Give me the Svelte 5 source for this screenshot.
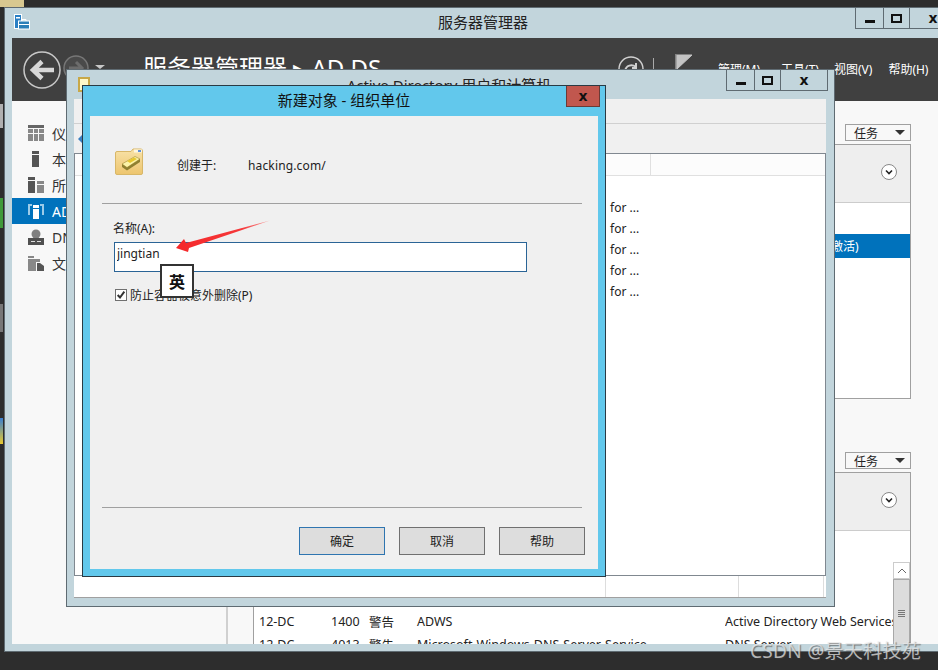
<script>
  const menus = ["管理(M)", "工具(T)", "视图(V)", "帮助(H)"];
  const navItems = [
    { label: "仪表板", icon: "grid" },
    { label: "本地服务器", icon: "server" },
    { label: "所有服务器", icon: "servers" },
    { label: "AD DS", icon: "ad", active: true },
    { label: "DNS", icon: "dns" },
    { label: "文件和存储服务", icon: "files" }
  ];
  const events = [
    ["12-DC", "1400", "警告", "ADWS", "Active Directory Web Services"],
    ["12-DC", "4013", "警告", "Microsoft-Windows-DNS-Server-Service", "DNS Server"]
  ];
  const rows = [1, 2, 3, 4, 5];
</script>

<div class="desktop">
  <!-- bits of desktop icons left of the window -->
  <div class="dk dk-yellow"></div>
  <div class="dk dk-silver"></div>
  <div class="dk dk-globe"></div>
  <div class="dk dk-grey"></div>
  <div class="dk dk-color"></div>

  <!-- Server Manager -->
  <div class="win main">
    <div class="titlebar">
      <svg class="app-icon" viewBox="0 0 16 16" width="16" height="16">
        <rect x="0.5" y="0.5" width="7" height="14" fill="#2a7fc4" stroke="#fff" />
        <rect x="2" y="3" width="4" height="1.5" fill="#fff" />
        <rect x="4.5" y="7" width="11" height="8" fill="#2d7fb8" stroke="#fff" />
        <path d="M8 7 V5.5 H12 V7 M4.5 10.5 H15.5" fill="none" stroke="#fff" />
      </svg>
      <span class="main-title">服务器管理器</span>
      <div class="winbtns">
        <span class="wb min"><i></i></span>
        <span class="wb max"><i></i></span>
        <span class="wb close">x</span>
      </div>
    </div>
    <div class="band">
      <svg class="nav-back" viewBox="0 0 40 40" width="40" height="40">
        <circle cx="20" cy="20" r="18" fill="none" stroke="#c8c8c8" stroke-width="1.5" />
        <path d="M32 20 H12 M20 11.5 L11 20 L20 28.5" fill="none" stroke="#d8d8d8" stroke-width="4.5" />
      </svg>
      <svg class="nav-fwd" viewBox="0 0 26 26" width="26" height="26">
        <circle cx="13" cy="13" r="12" fill="#4a4a4a" stroke="#777" stroke-width="1.5" />
        <path d="M6 13 H18 M13 7 L19 13 L13 19" fill="none" stroke="#6c6c6c" stroke-width="3" />
      </svg>
      <i class="nav-drop"></i>
      <span class="crumb">服务器管理器 ▸ AD DS</span>
      <div class="band-right">
        <svg class="refresh" viewBox="0 0 26 26" width="26" height="26">
          <circle cx="13" cy="13" r="12" fill="none" stroke="#d0d0d0" stroke-width="1.5" />
          <path d="M7 15 C8 9 14 8 18 11 M18 7 V12 H14" fill="none" stroke="#d0d0d0" stroke-width="2" />
        </svg>
        <span class="pipe"></span>
        <svg class="flag" viewBox="0 0 18 24" width="18" height="24">
          <path d="M1 0 V24 M2 1 H17 L2 15 Z" fill="#c4c4c4" stroke="#c4c4c4" />
        </svg>
        <nav class="menus">
          {#each menus as m}<span>{m}</span>{/each}
        </nav>
      </div>
    </div>
    <div class="main-body">
      <aside class="sidebar">
        {#each navItems as item}
          <div class="nav-item" class:active={item.active}>
            <svg viewBox="0 0 16 16" width="16" height="16">
              {#if item.icon === "grid"}
                <path d="M0 0 H16 V3 H0 Z" fill="#666" />
                <path d="M0 4 H5 V8 H0 Z M0 9 H5 V16 H0 Z M6 4 H10 V8 H6 Z M11 4 H16 V8 H11 Z M6 9 H10 V16 H6 Z M11 9 H16 V16 H11 Z" fill="#888" />
              {:else if item.icon === "server"}
                <rect x="4" y="0" width="7" height="3" fill="#555" />
                <rect x="4" y="4" width="7" height="12" fill="#555" />
              {:else if item.icon === "servers"}
                <rect x="0" y="0" width="7" height="3" fill="#555" />
                <rect x="0" y="4" width="7" height="12" fill="#555" />
                <rect x="9" y="4" width="7" height="3" fill="#888" />
                <rect x="9" y="8" width="7" height="8" fill="#888" />
              {:else if item.icon === "ad"}
                <path d="M0 1 H4 V3 H2 V12 H0 Z M12 1 H16 V12 H14 V3 H12 Z" fill="#9ccbe8" />
                <rect x="5" y="2" width="6" height="3" fill="#fff" />
                <rect x="5" y="6" width="6" height="10" fill="#fff" />
              {:else if item.icon === "dns"}
                <circle cx="8" cy="5" r="4.5" fill="#808080" />
                <rect x="0" y="9" width="16" height="7" fill="#505050" />
                <path d="M3 12.5 H7 M9 12.5 H13" stroke="#ddd" stroke-width="1.2" />
              {:else}
                <path d="M0 1 H6 V3 H0 Z M0 4 H12 V7 H8 V16 H0 Z" fill="#888" />
                <path d="M9 8 H12 L16 11 V16 H9 Z" fill="#555" />
              {/if}
            </svg>
            <span>{item.label}</span>
          </div>
        {/each}
      </aside>
      <div class="gutter"></div>
      <section class="content">
        <div class="group first">
          <div class="tasks"><span>任务</span><i></i></div>
          <div class="panel p-top">
            <div class="panel-head"><span class="chev"><svg viewBox="0 0 10 10" width="10" height="10"><path d="M2 3.5 L5 6.5 L8 3.5" fill="none" stroke="#222" stroke-width="1.6" /></svg></span></div>
            <div class="panel-cols"></div>
            <div class="sel-row"><span>激活)</span></div>
          </div>
        </div>
        <div class="group second">
          <div class="tasks"><span>任务</span><i></i></div>
          <div class="panel p-bottom">
            <div class="panel-head"><span class="chev"><svg viewBox="0 0 10 10" width="10" height="10"><path d="M2 3.5 L5 6.5 L8 3.5" fill="none" stroke="#222" stroke-width="1.6" /></svg></span></div>
            <div class="events">
              {#each events as ev}
                <div class="ev">
                  <span class="c1">{ev[0]}</span><span class="c2">{ev[1]}</span><span class="c3">{ev[2]}</span><span class="c4">{ev[3]}</span><span class="c5">{ev[4]}</span>
                </div>
              {/each}
            </div>
            <div class="scroll">
              <span class="arrow"><svg viewBox="0 0 10 6" width="10" height="6"><path d="M1 5 L5 1 L9 5" fill="none" stroke="#666" /></svg></span>
              <span class="thumb"><i></i></span>
            </div>
          </div>
        </div>
      </section>
    </div>
  </div>

  <!-- Active Directory users and computers -->
  <div class="win ad">
    <div class="titlebar ad-title">
      <span class="ad-icon"></span>
      <span class="ad-name">Active Directory 用户和计算机</span>
      <div class="winbtns">
        <span class="wb min"><i></i></span>
        <span class="wb max"><i></i></span>
        <span class="wb close wide">x</span>
      </div>
    </div>
    <div class="ad-inner">
      <div class="ad-menu"></div>
      <div class="ad-tools"><i class="ad-back"></i></div>
      <div class="ad-list">
        <div class="ad-head"><span class="ad-col"></span></div>
        <div class="ad-rows">
          {#each rows as r}<div class="ad-row">for ...</div>{/each}
        </div>
      </div>
      <div class="ad-status"><span></span><span></span><span></span></div>
    </div>
  </div>

  <!-- New object dialog -->
  <div class="dialog">
    <div class="dlg-title">
      <span>新建对象 - 组织单位</span>
      <span class="dlg-close">x</span>
    </div>
    <div class="dlg-body">
      <div class="created">
        <svg viewBox="0 0 30 28" width="30" height="28">
          <defs>
            <linearGradient id="folderFill" x1="0" y1="0" x2="0" y2="1">
              <stop offset="0" stop-color="#f8e2a8" />
              <stop offset="1" stop-color="#edc56e" />
            </linearGradient>
          </defs>
          <path d="M1.5 5 Q1.5 3.5 3 3.5 H17 L19 1 H27 Q28.5 1 28.5 3 V25 Q28.5 26.5 27 26.5 H3 Q1.5 26.5 1.5 25 Z" fill="url(#folderFill)" stroke="#d8b768" />
          <rect x="20" y="1.5" width="8" height="3" fill="#fdf6e0" />
          <rect x="24" y="2" width="3" height="2" fill="#5f8fd8" />
          <path d="M8 16 L21 8.5 L26 11 L13 19.5 Z" fill="#fbf3a8" stroke="#a08a30" stroke-width="0.6" />
          <path d="M8 16 L13 19.5 L26 11 V14 L13 22.5 L8 19 Z" fill="#8f8030" />
          <path d="M13 13 L20 9.5 L23 11 L16 15 Z" fill="#e8c830" />
        </svg>
        <span class="created-lbl">创建于:</span>
        <span class="created-val">hacking.com/</span>
      </div>
      <hr />
      <label class="name-lbl" for="ou">名称(A):</label>
      <input id="ou" class="name-input" value="jingtian" />
      <div class="check-row">
        <span class="check"><svg viewBox="0 0 12 12" width="12" height="12"><path d="M2 6 L4.8 9 L10 2" fill="none" stroke="#333" stroke-width="2.4" /></svg></span>
        <span>防止容器被意外删除(P)</span>
      </div>
      <hr class="hr-bottom" />
      <div class="buttons">
        <span class="btn default">确定</span>
        <span class="btn">取消</span>
        <span class="btn">帮助</span>
      </div>
      <div class="ime">英</div>
      <svg class="arrow-mark" viewBox="0 0 100 34" width="100" height="34">
        <defs>
          <linearGradient id="arrowFill" x1="0" y1="0" x2="1" y2="0">
            <stop offset="0" stop-color="#f5282a" />
            <stop offset="0.7" stop-color="#f5383a" />
            <stop offset="1" stop-color="#f9a0a0" />
          </linearGradient>
        </defs>
        <path d="M95 0.5 L11 23 L9 19 L1 28 L13 32 L14 28 Z" fill="url(#arrowFill)" />
      </svg>
    </div>
  </div>

  <div class="watermark">CSDN @景天科技苑</div>
</div>

<style>
  :global(body) {
    margin: 0;
    background: #2d2d2d;
  }
  .desktop {
    position: relative;
    width: 938px;
    height: 670px;
    overflow: hidden;
    background: #2d2d2d;
    font-family: "Noto Sans", "Noto Sans CJK SC", sans-serif;
    font-size: 12px;
    color: #222;
  }
  .dk {
    position: absolute;
    left: 0;
    width: 3px;
  }
  .dk-yellow {
    top: 0;
    width: 24px;
    height: 7px;
    background: #d8c890;
  }
  .dk-silver {
    top: 104px;
    height: 24px;
    background: #b0b0b0;
  }
  .dk-globe {
    top: 198px;
    height: 30px;
    background: #3f9a3a;
  }
  .dk-grey {
    top: 304px;
    height: 28px;
    background: #777;
  }
  .dk-color {
    top: 418px;
    height: 26px;
    background: linear-gradient(#3a7fd0, #e8c92e);
  }
  .win {
    position: absolute;
    box-sizing: border-box;
    background: #c2d5dc;
    border: 1px solid #5f6b72;
    display: flex;
    flex-direction: column;
  }
  .main {
    left: 4px;
    top: 7px;
    width: 958px;
    height: 645px;
    padding: 0 7px 7px;
  }
  .titlebar {
    position: relative;
    height: 30px;
    flex: none;
    display: flex;
    align-items: center;
    justify-content: center;
    font-size: 15px;
  }
  .app-icon {
    position: absolute;
    left: 2px;
    top: 6px;
  }
  .main-title {
    margin-top: -3px;
  }
  .winbtns {
    position: absolute;
    top: 0;
    display: flex;
    height: 21px;
    right: -3px;
    border-left: 1px solid #5f6b72;
    border-bottom: 1px solid #5f6b72;
    box-sizing: border-box;
  }
  .wb {
    width: 27px;
    display: flex;
    align-items: center;
    justify-content: center;
    border-right: 1px solid #5f6b72;
    font-weight: 700;
    font-size: 14px;
    line-height: 16px;
    color: #111;
    font-family: "DejaVu Sans", sans-serif;
  }
  .wb.max {
    width: 25px;
  }
  .wb.close {
    width: 46px;
  }
  .wb i {
    display: block;
  }
  .wb.min i {
    width: 10px;
    height: 3px;
    margin-top: 7px;
    background: #111;
  }
  .wb.max i {
    width: 7px;
    height: 5px;
    border: 2px solid #111;
  }
  .band {
    height: 63px;
    flex: none;
    background: #404040;
    position: relative;
    display: flex;
    align-items: center;
    padding-left: 10px;
    color: #fff;
  }
  .nav-fwd {
    margin-left: 1px;
    margin-top: -3px;
  }
  .nav-drop {
    width: 0;
    height: 0;
    margin: -5px 0 0 6px;
    border-left: 5px solid transparent;
    border-right: 5px solid transparent;
    border-top: 4px solid #c8c8c8;
  }
  .crumb {
    margin-left: 38px;
    font-size: 24px;
    white-space: nowrap;
    margin-top: -6px;
  }
  .band-right {
    position: absolute;
    left: 606px;
    top: 18px;
    display: flex;
    align-items: center;
    height: 26px;
    color: #fff;
  }
  .pipe {
    width: 1px;
    height: 22px;
    margin-left: 9px;
    background: #aaa;
  }
  .flag {
    margin-left: 21px;
    margin-top: -6px;
  }
  .menus {
    display: flex;
    margin-left: 25px;
    white-space: nowrap;
    font-size: 12px;
  }
  .menus span:nth-child(2) {
    margin-left: 21px;
  }
  .menus span:nth-child(3) {
    margin-left: 15px;
  }
  .menus span:nth-child(4) {
    margin-left: 16px;
  }
  .main-body {
    flex: 1;
    min-height: 0;
    display: flex;
    background: #f8f8f8;
    overflow: hidden;
  }
  .sidebar {
    width: 216px;
    box-sizing: border-box;
    border-right: 2px solid #d0d0d0;
    padding-top: 19px;
    flex: none;
    height: 100%;
  }
  .nav-item {
    height: 26px;
    display: flex;
    align-items: center;
    padding-left: 16px;
    gap: 8px;
    font-size: 14px;
    color: #333;
    white-space: nowrap;
  }
  .nav-item.active {
    background: #0072bc;
    color: #fff;
  }
  .gutter {
    width: 25px;
    flex: none;
  }
  .content {
    flex: none;
    width: 658px;
    display: flex;
    flex-direction: column;
    background: #f8f8f8;
  }
  .group {
    display: flex;
    flex-direction: column;
    align-items: flex-end;
  }
  .first {
    padding-top: 23px;
  }
  .second {
    flex: 1;
    min-height: 0;
    padding-top: 53px;
    background: #f8f8f8;
  }
  .tasks {
    width: 66px;
    height: 17px;
    box-sizing: border-box;
    border: 1px solid #a0a0a0;
    display: flex;
    align-items: center;
    justify-content: space-between;
    padding: 0 5px 0 8px;
    font-size: 12px;
    background: #f8f8f8;
  }
  .tasks i {
    width: 0;
    height: 0;
    border-left: 5px solid transparent;
    border-right: 5px solid transparent;
    border-top: 5px solid #333;
  }
  .panel {
    position: relative;
    width: 100%;
    margin-top: 3px;
    box-sizing: border-box;
    border: 1px solid #a0a0a0;
    border-bottom: none;
    background: #fff;
  }
  .p-top {
    height: 255px;
    border-bottom: 1px solid #a0a0a0;
  }
  .p-bottom {
    flex: 1;
    min-height: 0;
    overflow: hidden;
  }
  .panel-head {
    height: 58px;
    background: #eee;
    border-bottom: 1px solid #ccc;
    display: flex;
    align-items: center;
    justify-content: flex-end;
    padding-right: 13px;
    padding-bottom: 4px;
    box-sizing: border-box;
  }
  .chev {
    width: 14px;
    height: 14px;
    border: 1px solid #888;
    border-radius: 50%;
    background: #fff;
    display: flex;
    align-items: center;
    justify-content: center;
  }
  .panel-cols {
    height: 31px;
  }
  .sel-row {
    height: 24px;
    background: #0072bc;
    color: #fff;
    display: flex;
    align-items: center;
    padding-left: 577px;
  }
  .events {
    padding: 79px 0 0 5px;
    font-size: 12.5px;
  }
  .ev {
    height: 23px;
    display: flex;
    align-items: center;
    white-space: nowrap;
  }
  .c1 { width: 72px; }
  .c2 { width: 38px; }
  .c3 { width: 48px; }
  .c4 { width: 308px; }
  .c5 { width: 171px; overflow: hidden; }
  .scroll {
    position: absolute;
    right: 0;
    top: 89px;
    width: 17px;
    display: flex;
    flex-direction: column;
    background: #f0f0f0;
  }
  .arrow {
    height: 17px;
    display: flex;
    align-items: center;
    justify-content: center;
    background: #fff;
    border: 1px solid #ccc;
    box-sizing: border-box;
  }
  .thumb {
    height: 70px;
    background: #dcdcdc;
    border: 1px solid #a8a8a8;
    box-sizing: border-box;
    display: flex;
    justify-content: center;
    align-items: center;
  }
  .thumb i {
    width: 7px;
    height: 8px;
    background: repeating-linear-gradient(#777 0 1px, transparent 1px 2px);
  }
  .ad {
    left: 66px;
    top: 69px;
    width: 769px;
    height: 538px;
    padding: 0 8px 8px 7px;
  }
  .ad-title {
    position: relative;
    height: 29px;
  }
  .ad-icon {
    position: absolute;
    left: 4px;
    top: 7px;
    width: 12px;
    height: 15px;
    box-sizing: border-box;
    background: #fff8c8;
    border: 2px solid #c8a848;
  }
  .ad-name {
    margin-top: -1px;
    margin-left: -2px;
  }
  .ad .winbtns {
    right: -2px;
  }
  .ad-inner {
    flex: 1;
    min-height: 0;
    display: flex;
    flex-direction: column;
    background: #f0f0f0;
    border-bottom: 1px solid #a0a0a0;
  }
  .ad-menu {
    height: 24px;
    flex: none;
    border-bottom: 1px solid #d0d0d0;
  }
  .ad-tools {
    height: 29px;
    flex: none;
    display: flex;
    align-items: center;
    padding-left: 4px;
  }
  .ad-back {
    width: 0;
    height: 0;
    border-top: 4px solid transparent;
    border-bottom: 4px solid transparent;
    border-right: 4px solid #3a7fc0;
  }
  .ad-list {
    flex: 1;
    min-height: 0;
    background: #fff;
    border: 1px solid #808890;
  }
  .ad-head {
    height: 21px;
    background: #fcfcfc;
    border-bottom: 1px solid #e0e0e0;
    position: relative;
  }
  .ad-col {
    position: absolute;
    left: 575px;
    top: 0;
    bottom: 0;
    width: 1px;
    background: #e0e0e0;
  }
  .ad-rows {
    padding: 21px 0 0 535px;
  }
  .ad-row {
    height: 21px;
    line-height: 21px;
    white-space: nowrap;
  }
  .ad-status {
    height: 21px;
    flex: none;
    background: #fff;
    display: flex;
    justify-content: flex-end;
  }
  .ad-status span {
    border-left: 1px solid #ddd;
    box-sizing: border-box;
  }
  .ad-status span:nth-child(1) { width: 133px; }
  .ad-status span:nth-child(2) { width: 85px; }
  .ad-status span:nth-child(3) { width: 3px; }
  .dialog {
    position: absolute;
    left: 82px;
    top: 85px;
    width: 524px;
    height: 492px;
    box-sizing: border-box;
    background: #62c8ec;
    border: 1px solid #2a3a44;
    padding: 0 7px 7px;
    display: flex;
    flex-direction: column;
  }
  .dlg-title {
    position: relative;
    height: 30px;
    flex: none;
    display: flex;
    align-items: center;
    justify-content: center;
    font-size: 15px;
    color: #111;
    padding-bottom: 3px;
    box-sizing: border-box;
  }
  .dlg-close {
    position: absolute;
    right: -2px;
    top: 0;
    width: 34px;
    height: 21px;
    box-sizing: border-box;
    background: #c1574e;
    border: 1px solid #6b3a36;
    border-top: none;
    display: flex;
    align-items: center;
    justify-content: center;
    font-family: "DejaVu Sans", sans-serif;
    font-weight: 700;
    font-size: 14px;
    line-height: 16px;
  }
  .dlg-body {
    position: relative;
    flex: 1;
    background: #f0f0f0;
    padding: 32px 16px 0 12px;
    display: flex;
    flex-direction: column;
  }
  .created {
    height: 28px;
    display: flex;
    align-items: center;
    padding-left: 12px;
    font-size: 12px;
    color: #222;
  }
  .created svg {
    flex: none;
    margin-right: 33px;
  }
  .created-lbl {
    width: 71px;
    padding-top: 6px;
  }
  .created-val {
    padding-top: 6px;
    letter-spacing: 0.15px;
  }
  hr {
    border: none;
    height: 1px;
    background: #a0a0a0;
    margin: 27px 0 0;
    flex: none;
  }
  .name-lbl {
    margin: 17px 0 0 11px;
    line-height: 16px;
  }
  .name-input {
    display: block;
    box-sizing: border-box;
    width: 413px;
    height: 30px;
    margin: 5px 0 0 12px;
    padding: 0 0 8px 2px;
    border: 1px solid #2a6496;
    background: #fff;
    font: inherit;
    color: #222;
    outline: none;
  }
  .check-row {
    display: flex;
    align-items: center;
    gap: 3px;
    margin: 16px 0 0 13px;
    height: 13px;
  }
  .check {
    width: 12px;
    height: 12px;
    border: 1px solid #707070;
    background: #fff;
    box-sizing: border-box;
    display: flex;
    align-items: center;
    justify-content: center;
    overflow: hidden;
  }
  .hr-bottom {
    margin-top: 206px;
  }
  .buttons {
    display: flex;
    justify-content: flex-end;
    gap: 14px;
    margin: 19px -3px 0 0;
  }
  .btn {
    width: 86px;
    height: 28px;
    box-sizing: border-box;
    background: #ddd;
    border: 1px solid #707070;
    display: flex;
    align-items: center;
    justify-content: center;
  }
  .btn.default {
    border-color: #2f75b0;
  }
  .ime {
    position: absolute;
    left: 70px;
    top: 148px;
    width: 34px;
    height: 34px;
    box-sizing: border-box;
    border: 2px solid #333;
    background: #fff;
    display: flex;
    align-items: center;
    justify-content: center;
    font-size: 16px;
    font-weight: 700;
    color: #111;
  }
  .arrow-mark {
    position: absolute;
    left: 85px;
    top: 104px;
  }
  .watermark {
    position: absolute;
    left: 750px;
    top: 638px;
    font-size: 19px;
    line-height: 26px;
    letter-spacing: 0.3px;
    white-space: nowrap;
    color: rgba(235, 235, 235, 0.72);
    text-shadow: 1px 1px 1px rgba(60, 60, 60, 0.6);
  }
</style>
